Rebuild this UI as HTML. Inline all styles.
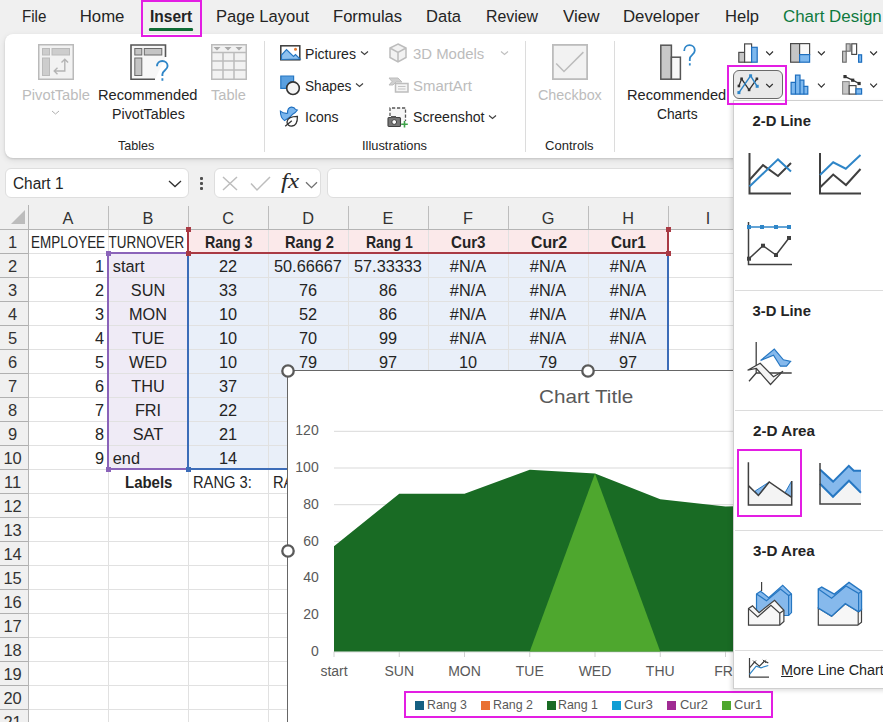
<!DOCTYPE html>
<html><head><meta charset="utf-8">
<style>
*{margin:0;padding:0;box-sizing:border-box}
html,body{width:883px;height:722px;overflow:hidden}
body{background:#f0f0f0;font-family:"Liberation Sans",sans-serif;color:#242424;position:relative}
.a{position:absolute}
.t{position:absolute;white-space:nowrap;line-height:1}
#ribbon{left:5px;top:34px;width:900px;height:124px;background:#fff;border-radius:8px;box-shadow:0 1px 2px rgba(0,0,0,.12),0 2px 6px rgba(0,0,0,.10)}
.sep{position:absolute;width:1px;background:#dcdcdc}
svg{position:absolute;overflow:visible}
</style></head><body>
<div class="t" style="left:22.40px;top:9.08px;font-size:16.8px;transform:scaleX(0.9021);transform-origin:0 0">File</div>
<div class="t" style="left:79.70px;top:9.08px;font-size:16.8px">Home</div>
<div class="t" style="left:215.70px;top:9.08px;font-size:16.8px;transform:scaleX(0.9880);transform-origin:0 0">Page Layout</div>
<div class="t" style="left:332.80px;top:9.08px;font-size:16.8px;transform:scaleX(0.9878);transform-origin:0 0">Formulas</div>
<div class="t" style="left:426.00px;top:9.08px;font-size:16.8px;transform:scaleX(0.9850);transform-origin:0 0">Data</div>
<div class="t" style="left:486.20px;top:9.08px;font-size:16.8px;transform:scaleX(0.9455);transform-origin:0 0">Review</div>
<div class="t" style="left:563.00px;top:9.08px;font-size:16.8px;transform:scaleX(1.0133);transform-origin:0 0">View</div>
<div class="t" style="left:623.00px;top:9.08px;font-size:16.8px">Developer</div>
<div class="t" style="left:724.50px;top:9.08px;font-size:16.8px;transform:scaleX(0.9877);transform-origin:0 0">Help</div>
<div class="t" style="left:149.50px;top:9.08px;font-size:16.8px;font-weight:bold;transform:scaleX(0.9240);transform-origin:0 0">Insert</div>
<div class="t" style="left:782.70px;top:9.08px;font-size:16.8px;color:#0e7a3e;transform:scaleX(1.0079);transform-origin:0 0">Chart Design</div>
<div class="a" style="left:149px;top:28px;width:44px;height:3px;border-radius:2px;background:#0f6b35"></div>


<!-- TABS -->
<div class="a" style="left:149px;top:28px;width:44px;height:3px;border-radius:2px;background:#0f6b35"></div>

<!-- RIBBON -->
<div id="ribbon" class="a"></div>
<div class="sep" style="left:264px;top:41px;height:111px"></div>
<div class="sep" style="left:525px;top:41px;height:111px"></div>
<div class="sep" style="left:614px;top:41px;height:111px"></div>

<!-- PivotTable -->
<svg style="left:38px;top:44px" width="36" height="36" viewBox="0 0 36 36">
<rect x="0.75" y="0.75" width="34.5" height="34.5" fill="#f2f2f2" stroke="#bababa" stroke-width="1.5"/>
<rect x="4.5" y="4.5" width="7" height="6.5" fill="#cdcdcd" stroke="#bababa" stroke-width="1"/>
<rect x="14" y="4.5" width="17.5" height="6.5" fill="#cdcdcd" stroke="#bababa" stroke-width="1"/>
<rect x="4.5" y="14" width="7" height="17.5" fill="#cdcdcd" stroke="#bababa" stroke-width="1"/>
<path d="M26.8 15.5V27H16.5M23.5 18.5l3.3-3.3 3.3 3.3M19.5 23.7L16.2 27l3.3 3.3" fill="none" stroke="#b4b4b4" stroke-width="1.4"/>
</svg>
<svg style="left:51px;top:110px" width="9" height="5" viewBox="0 0 9 5"><path d="M1 1l3.5 3 3.5-3" fill="none" stroke="#b0b0b0" stroke-width="1"/></svg>

<!-- Recommended PivotTables -->
<svg style="left:130px;top:44px" width="40" height="40" viewBox="0 0 40 40">
<path d="M25 35.2H1V1h34.5v12" fill="#f7f7f7" stroke="#555" stroke-width="1.6"/>
<rect x="4.8" y="4.5" width="7" height="6.5" fill="#c4c4c4" stroke="#6a6a6a" stroke-width="1"/>
<rect x="14.3" y="4.5" width="17.5" height="6.5" fill="#c4c4c4" stroke="#6a6a6a" stroke-width="1"/>
<rect x="4.8" y="14" width="7" height="17.5" fill="#c4c4c4" stroke="#6a6a6a" stroke-width="1"/>
<path d="M27 22.3c0-3.2 2.4-5.3 5.3-5.3s5.3 2 5.3 5c0 4-5.2 4.3-5.2 8.3V32M32.4 34.2v2.6" fill="none" stroke="#2f86c8" stroke-width="1.9"/>
</svg>

<!-- Table -->
<svg style="left:211px;top:44px" width="36" height="36" viewBox="0 0 36 36">
<rect x="0.75" y="0.75" width="34.5" height="34.5" fill="#f2f2f2" stroke="#bcbcbc" stroke-width="1.5"/>
<path d="M1 8.5H35M1 17H35M1 26H35M12 8.5V35M23 8.5V35" stroke="#bcbcbc" stroke-width="1.5" fill="none"/>
<path d="M2.5 3h7l-3.5 3.5zM13.5 3h7l-3.5 3.5zM24.5 3h7l-3.5 3.5z" fill="#a9a9a9"/>
</svg>

<!-- Illustrations -->
<svg style="left:280px;top:45px" width="21" height="16" viewBox="0 0 21 16">
<rect x="0.8" y="0.8" width="19" height="14" fill="#fff" stroke="#3a3a3a" stroke-width="1.5"/>
<path d="M1.5 14.5V10l5-5.5 7 7 2-2 4.5 4.5z" fill="#8ec1ef" stroke="#2677c2" stroke-width="1.2"/>
<circle cx="15.5" cy="4.3" r="1.5" fill="#e3782f"/>
</svg>
<svg style="left:360px;top:50px" width="9" height="6" viewBox="0 0 9 6"><path d="M1 1.5l3.5 3 3.5-3" fill="none" stroke="#404040" stroke-width="1.2"/></svg>

<svg style="left:0;top:0" width="883" height="722" viewBox="0 0 883 722">
<path d="M280.8 76H293.6V81.7A7 7 0 0 0 286.2 88.4H280.8z" fill="#5aa0e0" stroke="#2677c2" stroke-width="1.2"/>
<circle cx="293" cy="88.2" r="6.3" fill="#f4f4f4" stroke="#333" stroke-width="1.6"/>
</svg>
<svg style="left:355px;top:82px" width="9" height="6" viewBox="0 0 9 6"><path d="M1 1.5l3.5 3 3.5-3" fill="none" stroke="#404040" stroke-width="1.2"/></svg>

<svg style="left:0;top:0" width="883" height="722" viewBox="0 0 883 722">
<path d="M280.4 111.2Q283.5 113.8 287.6 113.3Q287.3 107.6 291.2 107.1Q294.3 106.9 295.6 109.4L297.4 110Q295.5 113 292.3 114.6Q289.5 118.2 284.6 120.6Q280.3 117.8 280.4 111.2z" fill="#7ab6ee" stroke="#1f6fbf" stroke-width="1.1"/>
<path d="M297.4 116.4C292 116.4 287.5 118 287 122C287 125 289.5 126.3 292 126C296 125.5 297.5 121 297.4 116.4z" fill="#fff" stroke="#333" stroke-width="1.3"/>
<path d="M285.2 126.2L291.8 120.8" fill="none" stroke="#333" stroke-width="1.3"/>
</svg>

<svg style="left:389px;top:43px" width="18" height="20" viewBox="0 0 18 20">
<path d="M9 1L17 5v9.5L9 19 1 14.5V5z" fill="#f2f2f2"/><path d="M9 1L17 5v9.5L9 19 1 14.5V5zM1 5l8 4.5L17 5M9 9.5V19" fill="none" stroke="#bcbcbc" stroke-width="1.5"/>
</svg>
<svg style="left:500px;top:50px" width="9" height="6" viewBox="0 0 9 6"><path d="M1 1.5l3.5 3 3.5-3" fill="none" stroke="#c0c0c0" stroke-width="1.2"/></svg>

<svg style="left:388px;top:77px" width="21" height="16" viewBox="0 0 21 16">
<path d="M1 1h9l4 4H8L5 8H1l3-3.5z" fill="#cfcfcf" stroke="#bdbdbd" stroke-width="1"/>
<rect x="7.5" y="6.5" width="12.5" height="8.5" fill="#f4f4f4" stroke="#bdbdbd" stroke-width="1.5"/>
<path d="M10 9.5h7.5M10 12h7.5" stroke="#c4c4c4" stroke-width="1"/>
</svg>

<svg style="left:387px;top:107px" width="22" height="21" viewBox="0 0 22 21">
<path d="M3 9V1h15.5v13" fill="#f6f6f6" stroke="#555" stroke-width="1.3" stroke-dasharray="3.2 1.8"/>
<rect x="1" y="10.5" width="12.5" height="9" rx="1" fill="#777" stroke="#404040" stroke-width="1.1"/>
<rect x="4" y="9" width="5" height="2" fill="#555"/>
<circle cx="7.2" cy="15" r="2.4" fill="#fff" stroke="#404040" stroke-width="1"/>
<path d="M17.5 14v6.5M14.2 17.3h6.6" stroke="#3ea24a" stroke-width="1.6"/>
</svg>
<svg style="left:488px;top:114px" width="9" height="6" viewBox="0 0 9 6"><path d="M1 1.5l3.5 3 3.5-3" fill="none" stroke="#404040" stroke-width="1.2"/></svg>

<!-- Controls -->
<svg style="left:552px;top:44px" width="36" height="36" viewBox="0 0 36 36">
<rect x="0.9" y="0.9" width="34.2" height="34.2" fill="#f2f2f2" stroke="#bcbcbc" stroke-width="1.8"/>
<path d="M4.2 19.4L12 27.5 31.4 8.1" fill="none" stroke="#bcbcbc" stroke-width="1.5"/>
</svg>

<!-- Recommended Charts -->
<svg style="left:0;top:0" width="883" height="722" viewBox="0 0 883 722">
<rect x="660.8" y="45.2" width="10.6" height="34" fill="#c8c8c8" stroke="#555" stroke-width="1.5"/>
<rect x="671.4" y="57.2" width="9" height="22" fill="#f7f7f7" stroke="#555" stroke-width="1.5"/>
<path d="M684.2 51c0-3.6 2.3-5.8 5.3-5.8s5.3 2.2 5.3 5.3c0 4.2-5 4.6-5 8.4V61M689.8 63.2v2.4" fill="none" stroke="#2f86c8" stroke-width="1.8"/>
</svg>

<!-- chart type buttons -->
<svg style="left:0;top:0" width="883" height="722" viewBox="0 0 883 722">
<rect x="738.8" y="52.4" width="5.8" height="9.8" fill="#c6c6c6" stroke="#4a4a4a" stroke-width="1.2"/>
<rect x="744.6" y="43.9" width="7" height="18.3" fill="#fff" stroke="#4a4a4a" stroke-width="1.2"/>
<rect x="751.6" y="47.3" width="5.6" height="14.9" fill="#7db8ee" stroke="#1e6fbf" stroke-width="1.2"/>
<rect x="790.6" y="43.6" width="9" height="18.6" fill="#c6c6c6" stroke="#4a4a4a" stroke-width="1.2"/>
<rect x="799.6" y="43.6" width="10" height="11" fill="#f8f8f8" stroke="#4a4a4a" stroke-width="1.2"/>
<rect x="799.6" y="54.6" width="10" height="7.6" fill="#7db8ee" stroke="#1e6fbf" stroke-width="1.2"/>
<rect x="842.6" y="51.2" width="3.6" height="11" fill="#c6c6c6" stroke="#6a6a6a" stroke-width="1.1"/>
<rect x="846.2" y="43.8" width="4" height="7.4" fill="#c6c6c6" stroke="#6a6a6a" stroke-width="1.1"/>
<rect x="851.8" y="43.8" width="4.8" height="10.6" fill="#fff" stroke="#4a4a4a" stroke-width="1.2"/>
<rect x="858.6" y="54.8" width="3" height="7.4" fill="#7db8ee" stroke="#1e6fbf" stroke-width="1.2"/>
<path d="M791.1 94.2V82.4h4.4V75.2h4.5v5h3.9v6.1h3.9v7.9z" fill="#7db8ee" stroke="#1e6fbf" stroke-width="1.2"/>
<path d="M795.5 94.2V82.4M800 94.2V80.2M803.9 94.2V86.3" fill="none" stroke="#1e6fbf" stroke-width="1.2"/>
<rect x="842.6" y="81.6" width="6.6" height="12.5" fill="#c6c6c6" stroke="#8a8a8a" stroke-width="1.1"/>
<rect x="849.2" y="85.6" width="6.8" height="8.5" fill="#fff" stroke="#4a4a4a" stroke-width="1.2"/>
<rect x="856" y="88.8" width="5.6" height="5.3" fill="#7db8ee" stroke="#1e6fbf" stroke-width="1.2"/>
<path d="M845 76.6L852.7 80.2 859.1 83.5" fill="none" stroke="#333" stroke-width="1.3"/>
<rect x="843.4" y="75" width="3.2" height="3.2" fill="#333"/><rect x="851.1" y="78.6" width="3.2" height="3.2" fill="#333"/><rect x="857.5" y="81.9" width="3.2" height="3.2" fill="#333"/>
<path d="M766.2 51.5l3.4 3.4 3.4-3.4M818 51.5l3.4 3.4 3.4-3.4M870.2 51.5l3.4 3.4 3.4-3.4M818 83.7l3.4 3.4 3.4-3.4M870.2 83.7l3.4 3.4 3.4-3.4" fill="none" stroke="#303030" stroke-width="1.2"/>
</svg>
<div class="a" style="left:733px;top:70px;width:50px;height:29px;border-radius:6px;background:#e9e9e9;border:1px solid #6a6a6a"></div>
<svg style="left:0;top:0" width="883" height="722" viewBox="0 0 883 722">
<path d="M738.9 86L741.6 78.8 749.1 89.9 756.9 78.8" fill="none" stroke="#333" stroke-width="1.3"/>
<path d="M738.9 92.6L750.6 75.8 757.2 86.3" fill="none" stroke="#2f86c8" stroke-width="1.4"/>
<rect x="737.6" y="84.7" width="2.6" height="2.6" fill="#333"/><rect x="740.3" y="77.5" width="2.6" height="2.6" fill="#333"/><rect x="747.8" y="88.6" width="2.6" height="2.6" fill="#333"/><rect x="755.6" y="77.5" width="2.6" height="2.6" fill="#333"/>
<rect x="737.4" y="91.1" width="3" height="3" fill="#2f86c8"/><rect x="749.1" y="74.3" width="3" height="3" fill="#2f86c8"/><rect x="755.7" y="84.8" width="3" height="3" fill="#2f86c8"/>
</svg>
<svg style="left:0;top:0" width="883" height="722" viewBox="0 0 883 722"><path d="M766.2 84l3.3 3.2 3.3-3.2" fill="none" stroke="#303030" stroke-width="1.2"/></svg>

<!-- FORMULA BAR -->
<div class="a" style="left:5px;top:168px;width:184px;height:30px;background:#fff;border:1px solid #dedede;border-radius:6px"></div>
<svg style="left:168px;top:179px" width="14" height="9" viewBox="0 0 14 9"><path d="M1 2l6 5.5 6-5.5" fill="none" stroke="#303030" stroke-width="1.3"/></svg>
<div class="a" style="left:200px;top:177px;width:3px;height:3px;background:#505050;border-radius:1px"></div>
<div class="a" style="left:200px;top:182px;width:3px;height:3px;background:#505050;border-radius:1px"></div>
<div class="a" style="left:200px;top:187px;width:3px;height:3px;background:#505050;border-radius:1px"></div>
<div class="a" style="left:214px;top:168px;width:107px;height:30px;background:#fff;border:1px solid #dedede;border-radius:6px"></div>
<svg style="left:222px;top:176px" width="16" height="15" viewBox="0 0 16 15"><path d="M1 1l14 13M15 1L1 14" fill="none" stroke="#bdbdbd" stroke-width="1.5"/></svg>
<svg style="left:250px;top:176px" width="21" height="15" viewBox="0 0 21 15"><path d="M1 7.5l6 6.5L20 1" fill="none" stroke="#bdbdbd" stroke-width="1.5"/></svg>
<svg style="left:305px;top:181px" width="13" height="8" viewBox="0 0 13 8"><path d="M1 1.2l5.5 5.5L12 1.2" fill="none" stroke="#707070" stroke-width="1.3"/></svg>
<div class="a" style="left:327px;top:168px;width:600px;height:30px;background:#fff;border:1px solid #dedede;border-radius:6px"></div>

<div class="t" style="left:22.00px;top:86.66px;font-size:15.4px;color:#bcbcbc;transform:scaleX(0.9568);transform-origin:0 0">PivotTable</div>
<div class="t" style="left:97.90px;top:86.66px;font-size:15.4px;transform:scaleX(0.9530);transform-origin:0 0">Recommended</div>
<div class="t" style="left:111.70px;top:106.36px;font-size:15.4px;transform:scaleX(0.9242);transform-origin:0 0">PivotTables</div>
<div class="t" style="left:211.00px;top:86.66px;font-size:15.4px;color:#bcbcbc;transform:scaleX(0.9509);transform-origin:0 0">Table</div>
<div class="t" style="left:118.20px;top:139.86px;font-size:12.8px;transform:scaleX(0.9813);transform-origin:0 0">Tables</div>
<div class="t" style="left:305.00px;top:46.06px;font-size:15.4px;transform:scaleX(0.9174);transform-origin:0 0">Pictures</div>
<div class="t" style="left:305.30px;top:77.66px;font-size:15.4px;transform:scaleX(0.8888);transform-origin:0 0">Shapes</div>
<div class="t" style="left:305.30px;top:108.96px;font-size:15.4px;transform:scaleX(0.9129);transform-origin:0 0">Icons</div>
<div class="t" style="left:413.30px;top:46.06px;font-size:15.4px;color:#bcbcbc;transform:scaleX(0.9686);transform-origin:0 0">3D Models</div>
<div class="t" style="left:413.00px;top:77.66px;font-size:15.4px;color:#bcbcbc;transform:scaleX(0.9711);transform-origin:0 0">SmartArt</div>
<div class="t" style="left:413.00px;top:108.96px;font-size:15.4px;transform:scaleX(0.9188);transform-origin:0 0">Screenshot</div>
<div class="t" style="left:362.40px;top:140.06px;font-size:12.8px;transform:scaleX(1.0051);transform-origin:0 0">Illustrations</div>
<div class="t" style="left:537.90px;top:86.66px;font-size:15.4px;color:#bcbcbc;transform:scaleX(0.9320);transform-origin:0 0">Checkbox</div>
<div class="t" style="left:545.40px;top:139.96px;font-size:12.8px;transform:scaleX(1.0193);transform-origin:0 0">Controls</div>
<div class="t" style="left:627.10px;top:86.66px;font-size:15.4px;transform:scaleX(0.9501);transform-origin:0 0">Recommended</div>
<div class="t" style="left:657.00px;top:106.36px;font-size:15.4px;transform:scaleX(0.8952);transform-origin:0 0">Charts</div>
<div class="t" style="left:12.50px;top:175.56px;font-size:16px;transform:scaleX(0.9623);transform-origin:0 0">Chart 1</div>
<div class="t" style="left:280.5px;top:171px;font-family:'Liberation Serif',serif;font-style:italic;font-size:21px;color:#2a2a2a;transform:scaleX(1.2);transform-origin:0 0">fx</div>
<div class="a" style="left:29px;top:230px;width:860px;height:500px;background:#fff"></div>
<div class="a" style="left:188px;top:229px;width:480px;height:24px;background:#fbe9ea"></div>
<div class="a" style="left:108px;top:253px;width:80px;height:216px;background:#efebf6"></div>
<div class="a" style="left:188px;top:253px;width:480px;height:216px;background:#e9eff9"></div>
<div class="a" style="left:108px;top:230px;width:1px;height:500px;background:#e1e1e1"></div>
<div class="a" style="left:188px;top:230px;width:1px;height:500px;background:#e1e1e1"></div>
<div class="a" style="left:268px;top:230px;width:1px;height:500px;background:#e1e1e1"></div>
<div class="a" style="left:348px;top:230px;width:1px;height:500px;background:#e1e1e1"></div>
<div class="a" style="left:428px;top:230px;width:1px;height:500px;background:#e1e1e1"></div>
<div class="a" style="left:508px;top:230px;width:1px;height:500px;background:#e1e1e1"></div>
<div class="a" style="left:588px;top:230px;width:1px;height:500px;background:#e1e1e1"></div>
<div class="a" style="left:668px;top:230px;width:1px;height:500px;background:#e1e1e1"></div>
<div class="a" style="left:748px;top:230px;width:1px;height:500px;background:#e1e1e1"></div>
<div class="a" style="left:828px;top:230px;width:1px;height:500px;background:#e1e1e1"></div>
<div class="a" style="left:29px;top:253px;width:860px;height:1px;background:#e1e1e1"></div>
<div class="a" style="left:29px;top:277px;width:860px;height:1px;background:#e1e1e1"></div>
<div class="a" style="left:29px;top:301px;width:860px;height:1px;background:#e1e1e1"></div>
<div class="a" style="left:29px;top:325px;width:860px;height:1px;background:#e1e1e1"></div>
<div class="a" style="left:29px;top:349px;width:860px;height:1px;background:#e1e1e1"></div>
<div class="a" style="left:29px;top:373px;width:860px;height:1px;background:#e1e1e1"></div>
<div class="a" style="left:29px;top:397px;width:860px;height:1px;background:#e1e1e1"></div>
<div class="a" style="left:29px;top:421px;width:860px;height:1px;background:#e1e1e1"></div>
<div class="a" style="left:29px;top:445px;width:860px;height:1px;background:#e1e1e1"></div>
<div class="a" style="left:29px;top:469px;width:860px;height:1px;background:#e1e1e1"></div>
<div class="a" style="left:29px;top:493px;width:860px;height:1px;background:#e1e1e1"></div>
<div class="a" style="left:29px;top:517px;width:860px;height:1px;background:#e1e1e1"></div>
<div class="a" style="left:29px;top:541px;width:860px;height:1px;background:#e1e1e1"></div>
<div class="a" style="left:29px;top:565px;width:860px;height:1px;background:#e1e1e1"></div>
<div class="a" style="left:29px;top:589px;width:860px;height:1px;background:#e1e1e1"></div>
<div class="a" style="left:29px;top:613px;width:860px;height:1px;background:#e1e1e1"></div>
<div class="a" style="left:29px;top:637px;width:860px;height:1px;background:#e1e1e1"></div>
<div class="a" style="left:29px;top:661px;width:860px;height:1px;background:#e1e1e1"></div>
<div class="a" style="left:29px;top:685px;width:860px;height:1px;background:#e1e1e1"></div>
<div class="a" style="left:29px;top:709px;width:860px;height:1px;background:#e1e1e1"></div>
<div class="a" style="left:29px;top:733px;width:860px;height:1px;background:#e1e1e1"></div>
<div class="a" style="left:0;top:229px;width:883px;height:1px;background:#b4b4b4"></div>
<div class="a" style="left:28px;top:205px;width:1px;height:520px;background:#b4b4b4"></div>
<div class="a" style="left:108px;top:206px;width:1px;height:23px;background:#bdbdbd"></div>
<div class="a" style="left:188px;top:206px;width:1px;height:23px;background:#bdbdbd"></div>
<div class="a" style="left:268px;top:206px;width:1px;height:23px;background:#bdbdbd"></div>
<div class="a" style="left:348px;top:206px;width:1px;height:23px;background:#bdbdbd"></div>
<div class="a" style="left:428px;top:206px;width:1px;height:23px;background:#bdbdbd"></div>
<div class="a" style="left:508px;top:206px;width:1px;height:23px;background:#bdbdbd"></div>
<div class="a" style="left:588px;top:206px;width:1px;height:23px;background:#bdbdbd"></div>
<div class="a" style="left:668px;top:206px;width:1px;height:23px;background:#bdbdbd"></div>
<div class="a" style="left:748px;top:206px;width:1px;height:23px;background:#bdbdbd"></div>
<div class="a" style="left:828px;top:206px;width:1px;height:23px;background:#bdbdbd"></div>
<div class="a" style="left:0;top:253px;width:28px;height:1px;background:#b0b0b0"></div>
<div class="a" style="left:0;top:277px;width:28px;height:1px;background:#b0b0b0"></div>
<div class="a" style="left:0;top:301px;width:28px;height:1px;background:#b0b0b0"></div>
<div class="a" style="left:0;top:325px;width:28px;height:1px;background:#b0b0b0"></div>
<div class="a" style="left:0;top:349px;width:28px;height:1px;background:#b0b0b0"></div>
<div class="a" style="left:0;top:373px;width:28px;height:1px;background:#b0b0b0"></div>
<div class="a" style="left:0;top:397px;width:28px;height:1px;background:#b0b0b0"></div>
<div class="a" style="left:0;top:421px;width:28px;height:1px;background:#b0b0b0"></div>
<div class="a" style="left:0;top:445px;width:28px;height:1px;background:#b0b0b0"></div>
<div class="a" style="left:0;top:469px;width:28px;height:1px;background:#b0b0b0"></div>
<div class="a" style="left:0;top:493px;width:28px;height:1px;background:#b0b0b0"></div>
<div class="a" style="left:0;top:517px;width:28px;height:1px;background:#b0b0b0"></div>
<div class="a" style="left:0;top:541px;width:28px;height:1px;background:#b0b0b0"></div>
<div class="a" style="left:0;top:565px;width:28px;height:1px;background:#b0b0b0"></div>
<div class="a" style="left:0;top:589px;width:28px;height:1px;background:#b0b0b0"></div>
<div class="a" style="left:0;top:613px;width:28px;height:1px;background:#b0b0b0"></div>
<div class="a" style="left:0;top:637px;width:28px;height:1px;background:#b0b0b0"></div>
<div class="a" style="left:0;top:661px;width:28px;height:1px;background:#b0b0b0"></div>
<div class="a" style="left:0;top:685px;width:28px;height:1px;background:#b0b0b0"></div>
<div class="a" style="left:0;top:709px;width:28px;height:1px;background:#b0b0b0"></div>
<div class="a" style="left:0;top:733px;width:28px;height:1px;background:#b0b0b0"></div>
<svg style="left:10px;top:209px" width="16" height="16" viewBox="0 0 16 16"><path d="M15 1V15H1z" fill="#bcbcbc"/></svg>
<div class="t" style="left:62.54px;top:209.90px;font-size:16.3px;color:#333">A</div>
<div class="t" style="left:142.58px;top:209.90px;font-size:16.3px;color:#333">B</div>
<div class="t" style="left:222.13px;top:209.90px;font-size:16.3px;color:#333">C</div>
<div class="t" style="left:302.13px;top:209.90px;font-size:16.3px;color:#333">D</div>
<div class="t" style="left:382.58px;top:209.90px;font-size:16.3px;color:#333">E</div>
<div class="t" style="left:463.03px;top:209.90px;font-size:16.3px;color:#333">F</div>
<div class="t" style="left:541.64px;top:209.90px;font-size:16.3px;color:#333">G</div>
<div class="t" style="left:622.13px;top:209.90px;font-size:16.3px;color:#333">H</div>
<div class="t" style="left:705.72px;top:209.90px;font-size:16.3px;color:#333">I</div>
<div class="t" style="left:783.92px;top:209.90px;font-size:16.3px;color:#333">J</div>
<div class="t" style="left:8.02px;top:234.03px;font-size:16.5px;color:#333">1</div>
<div class="t" style="left:8.02px;top:258.03px;font-size:16.5px;color:#333">2</div>
<div class="t" style="left:8.02px;top:282.03px;font-size:16.5px;color:#333">3</div>
<div class="t" style="left:8.02px;top:306.03px;font-size:16.5px;color:#333">4</div>
<div class="t" style="left:8.02px;top:330.03px;font-size:16.5px;color:#333">5</div>
<div class="t" style="left:8.02px;top:354.03px;font-size:16.5px;color:#333">6</div>
<div class="t" style="left:8.02px;top:378.03px;font-size:16.5px;color:#333">7</div>
<div class="t" style="left:8.02px;top:402.03px;font-size:16.5px;color:#333">8</div>
<div class="t" style="left:8.02px;top:426.03px;font-size:16.5px;color:#333">9</div>
<div class="t" style="left:3.44px;top:450.03px;font-size:16.5px;color:#333">10</div>
<div class="t" style="left:4.02px;top:474.03px;font-size:16.5px;color:#333">11</div>
<div class="t" style="left:3.44px;top:498.03px;font-size:16.5px;color:#333">12</div>
<div class="t" style="left:3.44px;top:522.03px;font-size:16.5px;color:#333">13</div>
<div class="t" style="left:3.44px;top:546.03px;font-size:16.5px;color:#333">14</div>
<div class="t" style="left:3.44px;top:570.03px;font-size:16.5px;color:#333">15</div>
<div class="t" style="left:3.44px;top:594.03px;font-size:16.5px;color:#333">16</div>
<div class="t" style="left:3.44px;top:618.03px;font-size:16.5px;color:#333">17</div>
<div class="t" style="left:3.44px;top:642.03px;font-size:16.5px;color:#333">18</div>
<div class="t" style="left:3.44px;top:666.03px;font-size:16.5px;color:#333">19</div>
<div class="t" style="left:3.44px;top:690.03px;font-size:16.5px;color:#333">20</div>
<div class="t" style="left:3.44px;top:714.03px;font-size:16.5px;color:#333">21</div>
<div class="t" style="left:31.00px;top:234.20px;font-size:16.3px;transform:scaleX(0.8273);transform-origin:0 0">EMPLOYEE TURNOVER</div>
<div class="t" style="left:205.40px;top:234.20px;font-size:16.3px;font-weight:bold;transform:scaleX(0.8738);transform-origin:0 0">Rang 3</div>
<div class="t" style="left:284.60px;top:234.20px;font-size:16.3px;font-weight:bold;transform:scaleX(0.8996);transform-origin:0 0">Rang 2</div>
<div class="t" style="left:365.70px;top:234.20px;font-size:16.3px;font-weight:bold;transform:scaleX(0.8609);transform-origin:0 0">Rang 1</div>
<div class="t" style="left:451.40px;top:234.20px;font-size:16.3px;font-weight:bold;transform:scaleX(0.9283);transform-origin:0 0">Cur3</div>
<div class="t" style="left:530.70px;top:234.20px;font-size:16.3px;font-weight:bold;transform:scaleX(0.9714);transform-origin:0 0">Cur2</div>
<div class="t" style="left:611.20px;top:234.20px;font-size:16.3px;font-weight:bold;transform:scaleX(0.9364);transform-origin:0 0">Cur1</div>
<div class="t" style="left:94.95px;top:258.20px;font-size:16.3px">1</div>
<div class="t" style="left:94.95px;top:282.20px;font-size:16.3px">2</div>
<div class="t" style="left:94.95px;top:306.20px;font-size:16.3px">3</div>
<div class="t" style="left:94.95px;top:330.20px;font-size:16.3px">4</div>
<div class="t" style="left:94.95px;top:354.20px;font-size:16.3px">5</div>
<div class="t" style="left:94.95px;top:378.20px;font-size:16.3px">6</div>
<div class="t" style="left:94.95px;top:402.20px;font-size:16.3px">7</div>
<div class="t" style="left:94.95px;top:426.20px;font-size:16.3px">8</div>
<div class="t" style="left:94.95px;top:450.20px;font-size:16.3px">9</div>
<div class="t" style="left:112.80px;top:258.20px;font-size:16.3px">start</div>
<div class="t" style="left:130.80px;top:282.20px;font-size:16.3px">SUN</div>
<div class="t" style="left:128.97px;top:306.20px;font-size:16.3px">MON</div>
<div class="t" style="left:131.70px;top:330.20px;font-size:16.3px">TUE</div>
<div class="t" style="left:128.97px;top:354.20px;font-size:16.3px">WED</div>
<div class="t" style="left:131.25px;top:378.20px;font-size:16.3px">THU</div>
<div class="t" style="left:134.88px;top:402.20px;font-size:16.3px">FRI</div>
<div class="t" style="left:132.76px;top:426.20px;font-size:16.3px">SAT</div>
<div class="t" style="left:112.80px;top:450.20px;font-size:16.3px">end</div>
<div class="t" style="left:218.95px;top:258.20px;font-size:16.3px">22</div>
<div class="t" style="left:218.95px;top:282.20px;font-size:16.3px">33</div>
<div class="t" style="left:218.95px;top:306.20px;font-size:16.3px">10</div>
<div class="t" style="left:218.95px;top:330.20px;font-size:16.3px">10</div>
<div class="t" style="left:218.95px;top:354.20px;font-size:16.3px">10</div>
<div class="t" style="left:218.95px;top:378.20px;font-size:16.3px">37</div>
<div class="t" style="left:218.95px;top:402.20px;font-size:16.3px">22</div>
<div class="t" style="left:218.95px;top:426.20px;font-size:16.3px">21</div>
<div class="t" style="left:218.95px;top:450.20px;font-size:16.3px">14</div>
<div class="t" style="left:274.01px;top:258.20px;font-size:16.3px">50.66667</div>
<div class="t" style="left:298.95px;top:282.20px;font-size:16.3px">76</div>
<div class="t" style="left:298.95px;top:306.20px;font-size:16.3px">52</div>
<div class="t" style="left:298.95px;top:330.20px;font-size:16.3px">70</div>
<div class="t" style="left:298.95px;top:354.20px;font-size:16.3px">79</div>
<div class="t" style="left:354.01px;top:258.20px;font-size:16.3px">57.33333</div>
<div class="t" style="left:378.95px;top:282.20px;font-size:16.3px">86</div>
<div class="t" style="left:378.95px;top:306.20px;font-size:16.3px">86</div>
<div class="t" style="left:378.95px;top:330.20px;font-size:16.3px">99</div>
<div class="t" style="left:378.95px;top:354.20px;font-size:16.3px">97</div>
<div class="t" style="left:449.87px;top:258.20px;font-size:16.3px">#N/A</div>
<div class="t" style="left:449.87px;top:282.20px;font-size:16.3px">#N/A</div>
<div class="t" style="left:449.87px;top:306.20px;font-size:16.3px">#N/A</div>
<div class="t" style="left:449.87px;top:330.20px;font-size:16.3px">#N/A</div>
<div class="t" style="left:458.95px;top:354.20px;font-size:16.3px">10</div>
<div class="t" style="left:529.87px;top:258.20px;font-size:16.3px">#N/A</div>
<div class="t" style="left:529.87px;top:282.20px;font-size:16.3px">#N/A</div>
<div class="t" style="left:529.87px;top:306.20px;font-size:16.3px">#N/A</div>
<div class="t" style="left:529.87px;top:330.20px;font-size:16.3px">#N/A</div>
<div class="t" style="left:538.95px;top:354.20px;font-size:16.3px">79</div>
<div class="t" style="left:609.87px;top:258.20px;font-size:16.3px">#N/A</div>
<div class="t" style="left:609.87px;top:282.20px;font-size:16.3px">#N/A</div>
<div class="t" style="left:609.87px;top:306.20px;font-size:16.3px">#N/A</div>
<div class="t" style="left:609.87px;top:330.20px;font-size:16.3px">#N/A</div>
<div class="t" style="left:618.95px;top:354.20px;font-size:16.3px">97</div>
<div class="t" style="left:125.00px;top:474.20px;font-size:16.3px;font-weight:bold;transform:scaleX(0.9193);transform-origin:0 0">Labels</div>
<div class="t" style="left:192.90px;top:474.20px;font-size:16.3px;transform:scaleX(0.9034);transform-origin:0 0">RANG 3:</div>
<div class="t" style="left:272.60px;top:474.20px;font-size:16.3px;transform:scaleX(0.9034);transform-origin:0 0">RANG 3:</div>
<div class="a" style="left:107px;top:252px;width:2px;height:218px;background:#8a63b9"></div>
<div class="a" style="left:107px;top:252px;width:82px;height:2px;background:#8a63b9"></div>
<div class="a" style="left:107px;top:468px;width:82px;height:2px;background:#8a63b9"></div>
<div class="a" style="left:187px;top:229px;width:2px;height:24px;background:#a93a44"></div>
<div class="a" style="left:667px;top:229px;width:2px;height:24px;background:#a93a44"></div>
<div class="a" style="left:187px;top:252px;width:482px;height:2px;background:#a93a44"></div>
<div class="a" style="left:187px;top:254px;width:2px;height:215px;background:#3c6cb8"></div>
<div class="a" style="left:667px;top:254px;width:2px;height:215px;background:#3c6cb8"></div>
<div class="a" style="left:187px;top:468px;width:482px;height:2px;background:#3c6cb8"></div>
<div class="a" style="left:185.5px;top:250.5px;width:5px;height:5px;background:#a93a44"></div>
<div class="a" style="left:105.5px;top:250.5px;width:5px;height:5px;background:#8a63b9"></div>
<div class="a" style="left:105.5px;top:466.5px;width:5px;height:5px;background:#8a63b9"></div>
<div class="a" style="left:185.5px;top:466.5px;width:5px;height:5px;background:#3c6cb8"></div>
<div class="a" style="left:665.5px;top:250.5px;width:5px;height:5px;background:#a93a44"></div>
<div class="a" style="left:185.5px;top:226.5px;width:5px;height:5px;background:#a93a44"></div>
<div class="a" style="left:665.5px;top:226.5px;width:5px;height:5px;background:#a93a44"></div>
<div class="a" style="left:287px;top:370px;width:700px;height:400px;background:#fff;border-left:1px solid #666;border-top:1px solid #666"></div>
<svg style="left:0;top:0" width="883" height="722" viewBox="0 0 883 722">
<line x1="334.0" y1="614.80" x2="883" y2="614.80" stroke="#d9d9d9" stroke-width="1"/>
<line x1="334.0" y1="578.10" x2="883" y2="578.10" stroke="#d9d9d9" stroke-width="1"/>
<line x1="334.0" y1="541.40" x2="883" y2="541.40" stroke="#d9d9d9" stroke-width="1"/>
<line x1="334.0" y1="504.70" x2="883" y2="504.70" stroke="#d9d9d9" stroke-width="1"/>
<line x1="334.0" y1="468.00" x2="883" y2="468.00" stroke="#d9d9d9" stroke-width="1"/>
<line x1="334.0" y1="431.30" x2="883" y2="431.30" stroke="#d9d9d9" stroke-width="1"/>
<line x1="334.0" y1="652.0" x2="883" y2="652.0" stroke="#d9d9d9" stroke-width="1"/>
<line x1="334.00" y1="651.5" x2="334.00" y2="657" stroke="#d0d0d0" stroke-width="1"/>
<line x1="399.25" y1="651.5" x2="399.25" y2="657" stroke="#d0d0d0" stroke-width="1"/>
<line x1="464.50" y1="651.5" x2="464.50" y2="657" stroke="#d0d0d0" stroke-width="1"/>
<line x1="529.75" y1="651.5" x2="529.75" y2="657" stroke="#d0d0d0" stroke-width="1"/>
<line x1="595.00" y1="651.5" x2="595.00" y2="657" stroke="#d0d0d0" stroke-width="1"/>
<line x1="660.25" y1="651.5" x2="660.25" y2="657" stroke="#d0d0d0" stroke-width="1"/>
<line x1="725.50" y1="651.5" x2="725.50" y2="657" stroke="#d0d0d0" stroke-width="1"/>
<line x1="790.75" y1="651.5" x2="790.75" y2="657" stroke="#d0d0d0" stroke-width="1"/>
<line x1="856.00" y1="651.5" x2="856.00" y2="657" stroke="#d0d0d0" stroke-width="1"/>
<polygon points="334.0,651.5 334.00,546.29 399.25,493.69 464.50,493.69 529.75,469.83 595.00,473.50 660.25,499.19 725.50,506.53 790.75,504.70 856.00,541.40 856.00,651.5" fill="#196b24"/>
<polygon points="529.75,651.5 595.00,473.50 660.25,651.5" fill="#4ea72e"/>
</svg>
<div class="t" style="left:310.93px;top:643.65px;font-size:14px;color:#595959">0</div>
<div class="t" style="left:303.16px;top:606.95px;font-size:14px;color:#595959">20</div>
<div class="t" style="left:303.16px;top:570.25px;font-size:14px;color:#595959">40</div>
<div class="t" style="left:303.16px;top:533.55px;font-size:14px;color:#595959">60</div>
<div class="t" style="left:303.16px;top:496.85px;font-size:14px;color:#595959">80</div>
<div class="t" style="left:295.32px;top:460.15px;font-size:14px;color:#595959">100</div>
<div class="t" style="left:295.32px;top:423.45px;font-size:14px;color:#595959">120</div>
<div class="t" style="left:320.38px;top:664.15px;font-size:14px;color:#595959">start</div>
<div class="t" style="left:384.48px;top:664.15px;font-size:14px;color:#595959">SUN</div>
<div class="t" style="left:448.15px;top:664.15px;font-size:14px;color:#595959">MON</div>
<div class="t" style="left:515.75px;top:664.15px;font-size:14px;color:#595959">TUE</div>
<div class="t" style="left:578.65px;top:664.15px;font-size:14px;color:#595959">WED</div>
<div class="t" style="left:645.87px;top:664.15px;font-size:14px;color:#595959">THU</div>
<div class="t" style="left:714.23px;top:664.15px;font-size:14px;color:#595959">FRI</div>
<div class="t" style="left:777.66px;top:664.15px;font-size:14px;color:#595959">SAT</div>
<div class="t" style="left:844.31px;top:664.15px;font-size:14px;color:#595959">end</div>
<div class="t" style="left:538.70px;top:387.42px;font-size:19px;color:#595959;transform:scaleX(1.0885);transform-origin:0 0">Chart Title</div>
<div class="a" style="left:415px;top:701px;width:9px;height:9px;background:#156082"></div>
<div class="t" style="left:427.20px;top:697.87px;font-size:13.5px;color:#595959;transform:scaleX(0.9142);transform-origin:0 0">Rang 3</div>
<div class="a" style="left:481px;top:701px;width:9px;height:9px;background:#e97132"></div>
<div class="t" style="left:493.00px;top:697.87px;font-size:13.5px;color:#595959;transform:scaleX(0.9187);transform-origin:0 0">Rang 2</div>
<div class="a" style="left:547px;top:701px;width:9px;height:9px;background:#196b24"></div>
<div class="t" style="left:558.00px;top:697.87px;font-size:13.5px;color:#595959;transform:scaleX(0.9187);transform-origin:0 0">Rang 1</div>
<div class="a" style="left:612.2px;top:701px;width:9px;height:9px;background:#0f9ed5"></div>
<div class="t" style="left:624.20px;top:697.87px;font-size:13.5px;color:#595959;transform:scaleX(0.9831);transform-origin:0 0">Cur3</div>
<div class="a" style="left:667.2px;top:701px;width:9px;height:9px;background:#a02b93"></div>
<div class="t" style="left:680.00px;top:697.87px;font-size:13.5px;color:#595959;transform:scaleX(0.9558);transform-origin:0 0">Cur2</div>
<div class="a" style="left:722.2px;top:701px;width:9px;height:9px;background:#4ea72e"></div>
<div class="t" style="left:733.60px;top:697.87px;font-size:13.5px;color:#595959;transform:scaleX(0.9626);transform-origin:0 0">Cur1</div>
<div class="a" style="left:404px;top:691px;width:369px;height:27px;border:2px solid #e31ee3"></div>
<svg style="left:279.8px;top:362.7px" width="16" height="16" viewBox="0 0 16 16"><circle cx="8" cy="8" r="5.7" fill="#fff" stroke="#5a5a5a" stroke-width="2.3"/></svg>
<svg style="left:579.5px;top:362.7px" width="16" height="16" viewBox="0 0 16 16"><circle cx="8" cy="8" r="5.7" fill="#fff" stroke="#5a5a5a" stroke-width="2.3"/></svg>
<svg style="left:279.8px;top:542.5px" width="16" height="16" viewBox="0 0 16 16"><circle cx="8" cy="8" r="5.7" fill="#fff" stroke="#5a5a5a" stroke-width="2.3"/></svg>
<div class="a" style="left:733px;top:100px;width:160px;height:589px;background:#fff;border:1px solid #cfcfcf;box-shadow:-2px 2px 4px rgba(0,0,0,.12)"></div>
<div class="a" style="left:735px;top:290px;width:150px;height:1px;background:#dcdcdc"></div>
<div class="a" style="left:735px;top:410px;width:150px;height:1px;background:#dcdcdc"></div>
<div class="a" style="left:735px;top:530px;width:150px;height:1px;background:#dcdcdc"></div>
<div class="a" style="left:735px;top:650px;width:150px;height:1px;background:#dcdcdc"></div>
<div class="t" style="left:752.50px;top:113.77px;font-size:14.8px;font-weight:bold;color:#242424">2-D Line</div>
<div class="t" style="left:752.50px;top:303.97px;font-size:14.8px;font-weight:bold;color:#242424">3-D Line</div>
<div class="t" style="left:752.50px;top:424.17px;font-size:14.8px;font-weight:bold;color:#242424;transform:scaleX(1.0272);transform-origin:0 0">2-D Area</div>
<div class="t" style="left:752.50px;top:544.07px;font-size:14.8px;font-weight:bold;color:#242424;transform:scaleX(1.0222);transform-origin:0 0">3-D Area</div>
<svg style="left:0;top:0" width="883" height="722" viewBox="0 0 883 722">
<path d="M749.5 153V193.5H791" fill="none" stroke="#404040" stroke-width="2"/>
<path d="M749.5 180L763 165.2 778 176 791 163" fill="none" stroke="#404040" stroke-width="2"/>
<path d="M749.5 186.5L778 159.4 791 171.5" fill="none" stroke="#2f86c8" stroke-width="2"/>
<path d="M820 153V193.5H861" fill="none" stroke="#404040" stroke-width="2"/>
<path d="M820 175L833.2 162.3 845.8 168.7 860.5 155" fill="none" stroke="#2f86c8" stroke-width="2"/>
<path d="M820 187.5L833.2 174.5 846 185 860.5 169" fill="none" stroke="#404040" stroke-width="2"/>
<path d="M748.5 222V264.5H792" fill="none" stroke="#404040" stroke-width="1.5"/>
<path d="M749 227H789" fill="none" stroke="#2f86c8" stroke-width="1.5"/>
<rect x="747" y="225" width="4" height="4" fill="#2f86c8"/>
<rect x="760" y="225" width="4" height="4" fill="#2f86c8"/>
<rect x="774" y="225" width="4" height="4" fill="#2f86c8"/>
<rect x="787" y="225" width="4" height="4" fill="#2f86c8"/>
<path d="M749 258.7 L763 245.7 L776 255 L789 238" fill="none" stroke="#404040" stroke-width="1.5"/>
<rect x="747" y="256.7" width="4" height="4" fill="#404040"/>
<rect x="761" y="243.7" width="4" height="4" fill="#404040"/>
<rect x="774" y="253" width="4" height="4" fill="#404040"/>
<rect x="787" y="236" width="4" height="4" fill="#404040"/>
<path d="M756.2 342V373H791.7M749 381.2L756.2 373" fill="none" stroke="#404040" stroke-width="1.3"/>
<path d="M760.6 360.5L774.3 349.1 783.4 359.8 790.6 361.3 786.5 366.2 780.4 366.2 773.5 355.2z" fill="#86b9ec" stroke="#2677c2" stroke-width="1.2"/>
<path d="M747.6 370.2L760.2 363.3 773.5 376.7 783 371.2 770.5 384.5 756.4 368.5z" fill="#f4f4f4" stroke="#404040" stroke-width="1.2"/>
<path d="M748.4 485.6L758.4 495.5 769.2 482 785 492.8 791.7 497.3V505H748.4z" fill="#f4f4f4"/>
<path d="M755.2 491L769.2 482 758.4 495.5z" fill="#86b9ec" stroke="#2677c2" stroke-width="1"/>
<path d="M785 492.8L791.7 481V497.3z" fill="#86b9ec" stroke="#2677c2" stroke-width="1"/>
<path d="M748.4 462.2V505H791.7V481" fill="none" stroke="#404040" stroke-width="1.5"/>
<path d="M748.4 485.6L758.4 495.5 769.2 482 785 492.8 791.7 497.3" fill="none" stroke="#404040" stroke-width="1.5"/>
<path d="M820 483.8L833 496.8 849 480.7 861 492.8V504H820z" fill="#f4f4f4"/>
<path d="M820 469.4L833.1 481.6 848.8 465.8 853.8 470.8H861V492.8L849 480.7 833 496.8 820 483.8z" fill="#86b9ec"/>
<path d="M820 469.4L833.1 481.6 848.8 465.8 853.8 470.8H861M820 483.8L833 496.8 849 480.7 861 492.8" fill="none" stroke="#2677c2" stroke-width="2"/>
<path d="M820 463V504H861" fill="none" stroke="#404040" stroke-width="1.5"/>
<path d="M761.6 582V591" stroke="#404040" stroke-width="1.2"/>
<path d="M756.5 594L760.6 591.2 768.7 597.8 782.7 585.3 791.5 594V612.6L788.6 615.5H756.5z" fill="#86b9ec" stroke="#2677c2" stroke-width="1.2"/>
<path d="M756.5 594L766.5 600.8 780.5 589 788.6 595.6V615.5M791.5 594L788.6 595.6" fill="none" stroke="#2677c2" stroke-width="1.2"/>
<path d="M748.5 608.6L752.5 605.9 759.1 612.6 774.6 600.3 783.9 610.3V621.4L779.8 625.1H748.5z" fill="#f7f7f7" stroke="#404040" stroke-width="1.2"/>
<path d="M748.5 608.6L757.7 617 770.9 605.2 779.8 613.3V625.1M783.9 610.3L779.8 613.3" fill="none" stroke="#404040" stroke-width="1.2"/>
<path d="M818.3 608.1V625.1H857.8L861.5 622.1V609.6L858.6 611.8 845.3 603.7 831.6 616.2z" fill="#f7f7f7" stroke="#404040" stroke-width="1.2"/>
<path d="M818.3 589L821.7 587.1 834.3 594.1 849 582.4 861.5 591.2V609.6L858.6 611.8 845.3 603.7 831.6 616.2 818.3 608.1z" fill="#86b9ec" stroke="#2677c2" stroke-width="1.4"/>
<path d="M818.3 589L831.6 598.3 846 586 858.6 593.4V611.8M861.5 591.2L858.6 593.4" fill="none" stroke="#2677c2" stroke-width="1.2"/>
<path d="M858.2 612V625" fill="none" stroke="#404040" stroke-width="1.1"/>
<path d="M749.5 658V677.2H769" fill="none" stroke="#404040" stroke-width="1.2"/>
<path d="M749.5 674.3L756.2 666.2 761 667.8 768.3 665.5" fill="none" stroke="#2f86c8" stroke-width="1.2"/>
<path d="M749.5 667.8L754.6 662.1 759.4 666.2 764.3 661.3 768.3 662.9" fill="none" stroke="#404040" stroke-width="1.2"/>
<path d="M753 660.5l3 3M756 660.5l-3 3M762.8 659.8l3 3M765.8 659.8l-3 3" fill="none" stroke="#404040" stroke-width="1"/>
</svg>
<div class="t" style="left:780.60px;top:662.23px;font-size:15.2px;color:#242424;transform:scaleX(0.9442);transform-origin:0 0">More Line Chart</div>
<div class="a" style="left:780.5px;top:676px;width:12px;height:1px;background:#242424"></div>
<div class="a" style="left:737px;top:449px;width:65px;height:68px;border:2px solid #e31ee3"></div>
<div class="a" style="left:141px;top:0px;width:61px;height:37px;border:2px solid #e31ee3"></div>
<div class="a" style="left:727px;top:65px;width:60px;height:40px;border:2px solid #e31ee3"></div>
</body></html>
